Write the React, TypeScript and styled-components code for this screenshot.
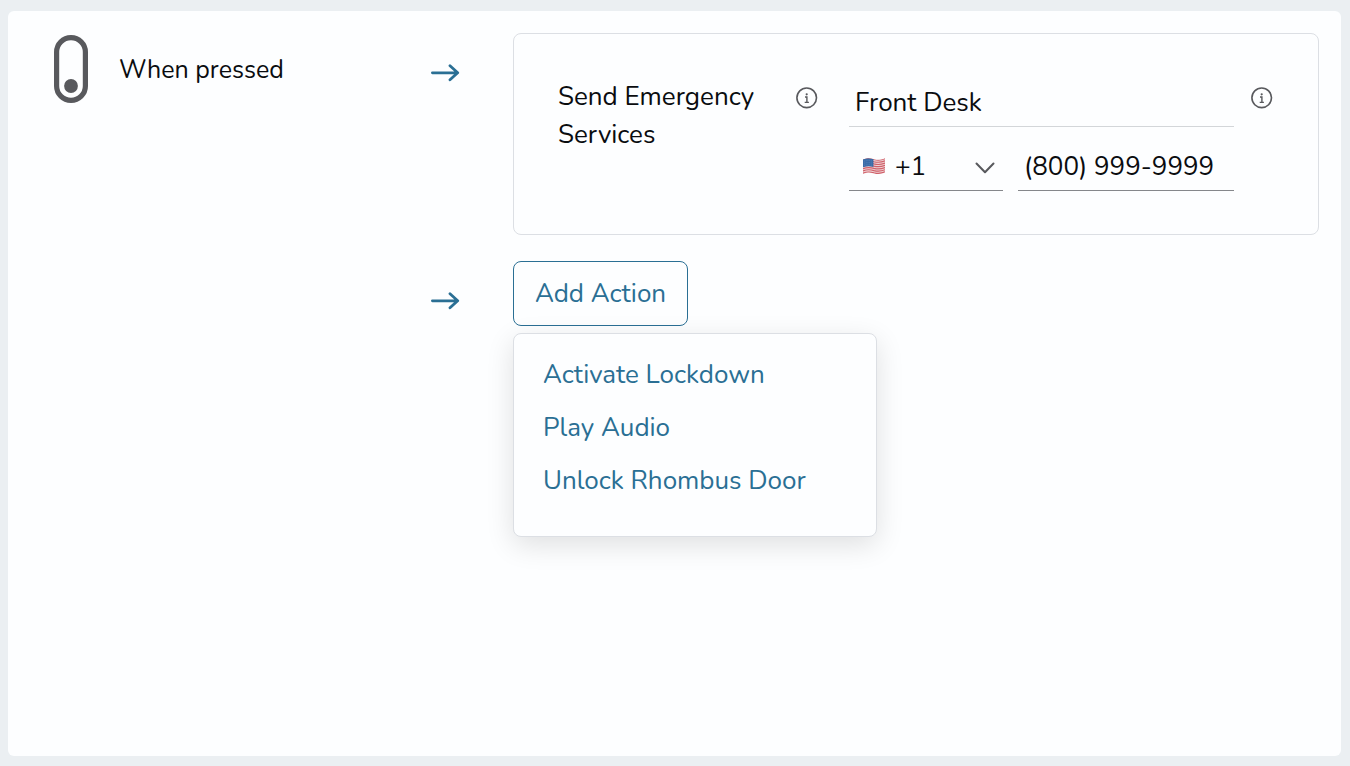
import React from 'react';
import styled, { createGlobalStyle } from 'styled-components';

const blue = '#2a6f94';
const ink = '#0a0c0f';
const gray = '#58595d';
const line = '#dcdfe4';
const surface = '#fdfeff';

const GlobalStyle = createGlobalStyle`
  *, *::before, *::after { box-sizing: border-box; }
  body {
    margin: 0;
    background: #ebeff2;
    color: ${ink};
    font: 26px/38px Nunito, Lato, sans-serif;
  }
  button, input, select { font: inherit; color: inherit; }
`;

const Page = styled.div`
  display: flex;
  min-height: 100vh;
  padding: 11px 9px 10px 8px;
`;

const Panel = styled.main`
  flex: 1;
  min-width: 0;
  display: flex;
  flex-direction: column;
  gap: 26px;
  padding: 22px 22px 22px 46px;
  border-radius: 6px;
  background: ${surface};
`;

const Rule = styled.section`
  display: grid;
  grid-template-columns: 376px 83px minmax(0, 1fr);
  align-items: start;
`;

const Trigger = styled.div`
  grid-column: 1;
  display: flex;
  align-items: center;
  gap: 31px;
  height: 72px;
`;

const TriggerLabel = styled.span`
  padding-top: 2px;
  font-size: 25px;
`;

const ArrowCell = styled.div`
  grid-column: 2;
  display: flex;
  align-items: center;
  height: 79px;
`;

const Card = styled.div`
  grid-column: 3;
  display: flex;
  align-items: flex-start;
  padding: 44px 45px 43px 44px;
  border: 1px solid ${line};
  border-radius: 8px;
`;

const ActionName = styled.div`
  width: 238px;
  flex: none;
  padding-right: 24px;
`;

const InfoButton = styled.button`
  display: flex;
  align-items: center;
  flex: none;
  width: 22px;
  height: 40px;
  padding: 0;
  border: 0;
  background: none;
`;

const Fields = styled.div`
  flex: 1;
  min-width: 0;
  display: flex;
  flex-direction: column;
  gap: 15px;
  margin: 0 17px 0 31px;
`;

const PhoneRow = styled.div`
  display: grid;
  grid-template-columns: 154px minmax(0, 1fr);
  gap: 15px;
`;

const TextInput = styled.input<{ $strong?: boolean }>`
  display: block;
  width: 100%;
  height: 49px;
  padding: 0 6px;
  border: 0;
  border-bottom: 1px solid ${({ $strong }) => ($strong ? '#85878b' : '#d3d6d9')};
  border-radius: 0;
  outline: 0;
  background: none;
`;

const CountryField = styled.div`
  position: relative;
`;

const CountrySelect = styled.select`
  appearance: none;
  display: block;
  width: 100%;
  height: 49px;
  padding: 2px 32px 0 46px;
  border: 0;
  border-bottom: 1px solid #85878b;
  border-radius: 0;
  outline: 0;
  background: none;
`;

const Flag = styled.svg`
  position: absolute;
  left: 13px;
  top: 15px;
  pointer-events: none;
`;

const Chevron = styled.svg`
  position: absolute;
  right: 8px;
  top: 19px;
  pointer-events: none;
`;

const ActionMenu = styled.div`
  grid-column: 3;
  position: relative;
  justify-self: start;
`;

const AddButton = styled.button`
  display: block;
  height: 65px;
  width: 175px;
  padding: 0;
  border: 1px solid ${blue};
  border-radius: 8px;
  background: ${surface};
  color: ${blue};
`;

const Menu = styled.ul`
  position: absolute;
  top: 72px;
  left: 0;
  width: 364px;
  margin: 0;
  padding: 14px 0 29px;
  border: 1px solid ${line};
  border-radius: 8px;
  background: ${surface};
  box-shadow: 0 8px 28px rgba(0, 0, 0, 0.12);
  list-style: none;
`;

const MenuItem = styled.button`
  display: block;
  width: 100%;
  height: 53px;
  padding: 0 29px;
  border: 0;
  background: none;
  color: ${blue};
  text-align: left;
`;

const Arrow = () => (
  <svg width="30" height="18" viewBox="0 0 30 18" fill="none" stroke={blue} strokeWidth="2.8" strokeLinecap="round" strokeLinejoin="round" aria-hidden="true">
    <path d="M2.4 8.8H27.4M20 1.8L27.7 8.8L20 15.8" />
  </svg>
);

const Info = () => (
  <InfoButton type="button" aria-label="More information">
    <svg width="22" height="22" viewBox="0 0 22 22" fill="none" stroke={gray} aria-hidden="true">
      <circle cx="10.7" cy="10.8" r="9.8" strokeWidth="1.6" />
      <path d="M9 10H10.9V15.3M8.7 15.4H12.9" strokeWidth="1.4" />
      <circle cx="10.7" cy="7.3" r="1.1" fill={gray} stroke="none" />
    </svg>
  </InfoButton>
);

const UsFlag = () => (
  <Flag width="24" height="19" viewBox="0 0 24 19" aria-hidden="true">
    <defs>
      <clipPath id="flag-cloth">
        <path d="M1 2.6C5 0.8 8.4 1.1 12 2.2C15.8 3.2 19 3 23 1.3V15.6C19 17.3 15.8 17.5 12 16.5C8.4 15.5 5 15.2 1 17Z" />
      </clipPath>
    </defs>
    <g clipPath="url(#flag-cloth)">
      <rect width="24" height="19" fill="#eed3d5" />
      {[0, 1, 2, 3, 4, 5, 6].map((n) => (
        <path
          key={n}
          transform={`translate(0 ${n * 2.22})`}
          d="M1 2.9C5 1.1 8.4 1.4 12 2.5C15.8 3.5 19 3.3 23 1.6"
          fill="none"
          stroke="#d0606a"
          strokeWidth="1.2"
        />
      ))}
      <path d="M0 2.5C4 0.8 8 1 11.4 2V9.9C8 9 4 9 0 10.6Z" fill="#3a6ca8" />
      <path d="M2 4.2C5 3.2 8 3.4 10.5 4.1M2 6.3C5 5.3 8 5.5 10.5 6.2M2 8.4C5 7.4 8 7.6 10.5 8.3" fill="none" stroke="#6f94c2" strokeWidth="0.6" strokeDasharray="0.8 1" />
    </g>
  </Flag>
);

const actions = ['Activate Lockdown', 'Play Audio', 'Unlock Rhombus Door'];

export default function App() {
  return (
    <>
      <GlobalStyle />
      <Page>
        <Panel>
          <Rule>
            <Trigger>
              <svg width="34" height="68" viewBox="0 0 34 68" aria-hidden="true">
                <rect x="2.6" y="2.6" width="28.8" height="62.8" rx="14.4" fill="none" stroke={gray} strokeWidth="5.2" />
                <circle cx="17" cy="51" r="6.9" fill={gray} />
              </svg>
              <TriggerLabel>When pressed</TriggerLabel>
            </Trigger>
            <ArrowCell><Arrow /></ArrowCell>
            <Card>
              <ActionName>Send Emergency Services</ActionName>
              <Info />
              <Fields>
                <TextInput aria-label="Contact name" defaultValue="Front Desk" />
                <PhoneRow>
                  <CountryField>
                    <CountrySelect aria-label="Country code" defaultValue="+1">
                      <option value="+1">+1</option>
                    </CountrySelect>
                    <UsFlag />
                    <Chevron width="20" height="14" viewBox="0 0 20 14" fill="none" stroke={gray} strokeWidth="2" strokeLinecap="round" strokeLinejoin="round" aria-hidden="true">
                      <path d="M1.5 2.5L10 11.2L18.5 2.5" />
                    </Chevron>
                  </CountryField>
                  <TextInput $strong type="tel" aria-label="Phone number" defaultValue="(800) 999-9999" />
                </PhoneRow>
              </Fields>
              <Info />
            </Card>
          </Rule>
          <Rule>
            <ArrowCell><Arrow /></ArrowCell>
            <ActionMenu>
              <AddButton type="button" aria-haspopup="true" aria-expanded="true">Add Action</AddButton>
              <Menu>
                {actions.map((name) => (
                  <li key={name}><MenuItem type="button">{name}</MenuItem></li>
                ))}
              </Menu>
            </ActionMenu>
          </Rule>
        </Panel>
      </Page>
    </>
  );
}
